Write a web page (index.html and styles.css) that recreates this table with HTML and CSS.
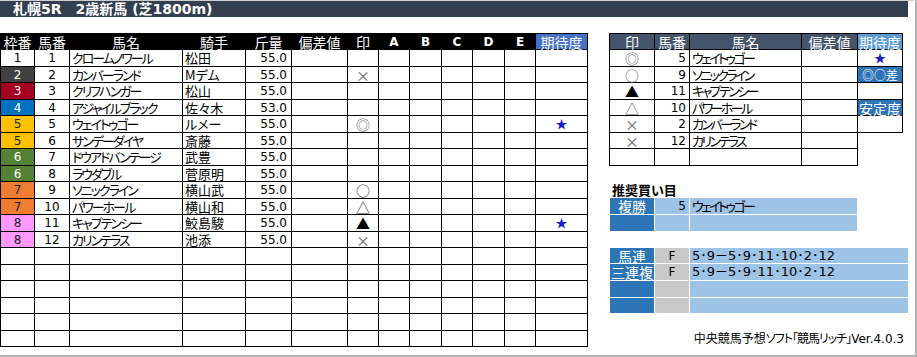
FILE: index.html
```
<!DOCTYPE html>
<html lang="ja">
<head>
<meta charset="utf-8">
<title>札幌5R 2歳新馬</title>
<link rel="stylesheet" href="styles.css">
</head>
<body>
<div class="frame">
  <div class="titlebar"><span class="title">札幌5R　2歳新馬 (芝1800m)</span></div>
  <div class="main">
    <div class="entries">
      <div class="c h">枠番</div><div class="c h">馬番</div><div class="c h">馬名</div><div class="c h">騎手</div><div class="c h">斤量</div><div class="c h">偏差値</div><div class="c h">印</div><div class="c h lat">A</div><div class="c h lat">B</div><div class="c h lat">C</div><div class="c h lat">D</div><div class="c h lat">E</div><div class="c h hx">期待度</div>

      <div class="c ctr w1">1</div><div class="c ctr">1</div><div class="c l kana">クロームノワール</div><div class="c l">松田</div><div class="c r">55.0</div><div class="c"></div><div class="c mk"></div><div class="c"></div><div class="c"></div><div class="c"></div><div class="c"></div><div class="c"></div><div class="c star"></div>

      <div class="c ctr w2">2</div><div class="c ctr">2</div><div class="c l kana">カンバーランド</div><div class="c l">Mデム</div><div class="c r">55.0</div><div class="c"></div><div class="c mk mg">×</div><div class="c"></div><div class="c"></div><div class="c"></div><div class="c"></div><div class="c"></div><div class="c star"></div>

      <div class="c ctr w3">3</div><div class="c ctr">3</div><div class="c l kana">クリフハンガー</div><div class="c l">松山</div><div class="c r">55.0</div><div class="c"></div><div class="c mk"></div><div class="c"></div><div class="c"></div><div class="c"></div><div class="c"></div><div class="c"></div><div class="c star"></div>

      <div class="c ctr w4">4</div><div class="c ctr">4</div><div class="c l kana">アジャイルブラック</div><div class="c l">佐々木</div><div class="c r">53.0</div><div class="c"></div><div class="c mk"></div><div class="c"></div><div class="c"></div><div class="c"></div><div class="c"></div><div class="c"></div><div class="c star"></div>

      <div class="c ctr w5">5</div><div class="c ctr">5</div><div class="c l kana">ウェイトゥゴー</div><div class="c l">ルメー</div><div class="c r">55.0</div><div class="c"></div><div class="c mk mg">◎</div><div class="c"></div><div class="c"></div><div class="c"></div><div class="c"></div><div class="c"></div><div class="c star">★</div>

      <div class="c ctr w5">5</div><div class="c ctr">6</div><div class="c l kana">サンデーダイヤ</div><div class="c l">斎藤</div><div class="c r">55.0</div><div class="c"></div><div class="c mk"></div><div class="c"></div><div class="c"></div><div class="c"></div><div class="c"></div><div class="c"></div><div class="c star"></div>

      <div class="c ctr w6">6</div><div class="c ctr">7</div><div class="c l kana">ドウアドバンテージ</div><div class="c l">武豊</div><div class="c r">55.0</div><div class="c"></div><div class="c mk"></div><div class="c"></div><div class="c"></div><div class="c"></div><div class="c"></div><div class="c"></div><div class="c star"></div>

      <div class="c ctr w6">6</div><div class="c ctr">8</div><div class="c l kana">ラウダブル</div><div class="c l">菅原明</div><div class="c r">55.0</div><div class="c"></div><div class="c mk"></div><div class="c"></div><div class="c"></div><div class="c"></div><div class="c"></div><div class="c"></div><div class="c star"></div>

      <div class="c ctr w7">7</div><div class="c ctr">9</div><div class="c l kana">ソニックライン</div><div class="c l">横山武</div><div class="c r">55.0</div><div class="c"></div><div class="c mk md">○</div><div class="c"></div><div class="c"></div><div class="c"></div><div class="c"></div><div class="c"></div><div class="c star"></div>

      <div class="c ctr w7">7</div><div class="c ctr">10</div><div class="c l kana">パワーホール</div><div class="c l">横山和</div><div class="c r">55.0</div><div class="c"></div><div class="c mk md">△</div><div class="c"></div><div class="c"></div><div class="c"></div><div class="c"></div><div class="c"></div><div class="c star"></div>

      <div class="c ctr w8">8</div><div class="c ctr">11</div><div class="c l kana">キャプテンシー</div><div class="c l">鮫島駿</div><div class="c r">55.0</div><div class="c"></div><div class="c mk mb">▲</div><div class="c"></div><div class="c"></div><div class="c"></div><div class="c"></div><div class="c"></div><div class="c star">★</div>

      <div class="c ctr w8">8</div><div class="c ctr">12</div><div class="c l kana">カリンテラス</div><div class="c l">池添</div><div class="c r">55.0</div><div class="c"></div><div class="c mk mg">×</div><div class="c"></div><div class="c"></div><div class="c"></div><div class="c"></div><div class="c"></div><div class="c star"></div>

      <div class="c"></div><div class="c"></div><div class="c"></div><div class="c"></div><div class="c"></div><div class="c"></div><div class="c"></div><div class="c"></div><div class="c"></div><div class="c"></div><div class="c"></div><div class="c"></div><div class="c"></div>
      <div class="c"></div><div class="c"></div><div class="c"></div><div class="c"></div><div class="c"></div><div class="c"></div><div class="c"></div><div class="c"></div><div class="c"></div><div class="c"></div><div class="c"></div><div class="c"></div><div class="c"></div>
      <div class="c"></div><div class="c"></div><div class="c"></div><div class="c"></div><div class="c"></div><div class="c"></div><div class="c"></div><div class="c"></div><div class="c"></div><div class="c"></div><div class="c"></div><div class="c"></div><div class="c"></div>
      <div class="c"></div><div class="c"></div><div class="c"></div><div class="c"></div><div class="c"></div><div class="c"></div><div class="c"></div><div class="c"></div><div class="c"></div><div class="c"></div><div class="c"></div><div class="c"></div><div class="c"></div>
      <div class="c"></div><div class="c"></div><div class="c"></div><div class="c"></div><div class="c"></div><div class="c"></div><div class="c"></div><div class="c"></div><div class="c"></div><div class="c"></div><div class="c"></div><div class="c"></div><div class="c"></div>
      <div class="c"></div><div class="c"></div><div class="c"></div><div class="c"></div><div class="c"></div><div class="c"></div><div class="c"></div><div class="c"></div><div class="c"></div><div class="c"></div><div class="c"></div><div class="c"></div><div class="c"></div>
    </div>

    <div class="side">
      <div class="picks-row">
        <div class="picks">
          <div class="c hs">印</div><div class="c hs">馬番</div><div class="c hs">馬名</div><div class="c hs">偏差値</div>
          <div class="c mk mg">◎</div><div class="c r">5</div><div class="c l kana-n">ウェイトゥゴー</div><div class="c"></div>
          <div class="c mk mg">○</div><div class="c r">9</div><div class="c l kana-n">ソニックライン</div><div class="c"></div>
          <div class="c mk mb">▲</div><div class="c r">11</div><div class="c l kana-n">キャプテンシー</div><div class="c"></div>
          <div class="c mk mg">△</div><div class="c r">10</div><div class="c l kana-n">パワーホール</div><div class="c"></div>
          <div class="c mk mg">×</div><div class="c r">2</div><div class="c l kana-n">カンバーランド</div><div class="c"></div>
          <div class="c mk mg">×</div><div class="c r">12</div><div class="c l kana-n">カリンテラス</div><div class="c"></div>
          <div class="c"></div><div class="c"></div><div class="c"></div><div class="c"></div>
        </div>
        <div class="expect">
          <div class="c ex-head">期待度</div>
          <div class="c star">★</div>
          <div class="c ex-label ex-sym">◎○差</div>
          <div class="c"></div>
          <div class="c ex-label">安定度</div>
          <div class="c"></div>
        </div>
      </div>

      <div class="bets-title">推奨買い目</div>

      <div class="bets bets-a">
        <div class="b-type">複勝</div><div class="b-num">5</div><div class="b-val kana-n">ウェイトゥゴー</div>
        <div class="b-type"></div><div class="b-num"></div><div class="b-val"></div>
      </div>

      <div class="bets bets-b">
        <div class="b-type">馬連</div><div class="b-kind">F</div><div class="b-val combo">5･9－5･9･11･10･2･12</div>
        <div class="b-type">三連複</div><div class="b-kind">F</div><div class="b-val combo">5･9－5･9･11･10･2･12</div>
        <div class="b-type"></div><div class="b-kind"></div><div class="b-val"></div>
        <div class="b-type"></div><div class="b-kind"></div><div class="b-val"></div>
      </div>

      <div class="footer">中央競馬予想<span class="kana-f">ソフト「競馬リッチ」</span><span class="ver">Ver.4.0.3</span></div>
    </div>
  </div>
</div>
</body>
</html>
```

FILE: styles.css
```
* { box-sizing: border-box; }

html, body {
  margin: 0;
  padding: 0;
  background: #ffffff;
}

body {
  font-family: "DejaVu Sans", "Noto Sans CJK JP", sans-serif;
  font-size: 12px;
  color: #000;
  font-feature-settings: "palt";
}

.frame {
  width: 917px;
  height: 357px;
  border-top: 1px solid #cfcfcf;
  border-right: 2px solid #b4b4b4;
  border-bottom: 2px solid #b4b4b4;
  overflow: hidden;
}

.titlebar {
  width: 908px;
  height: 16px;
  background: #333f50;
  display: flex;
  align-items: center;
  padding-left: 13px;
}

.title {
  color: #fff;
  font-weight: bold;
  font-size: 14px;
  line-height: 15px;
}

.main {
  display: flex;
  margin-top: 16px;
  gap: 21px;
  align-items: flex-start;
}

/* generic grid cell */
.c {
  border-right: 1px solid #000;
  border-bottom: 1px solid #000;
  display: flex;
  align-items: center;
  white-space: nowrap;
  line-height: 14px;
  font-size: 12px;
  min-width: 0;
}

.ctr { justify-content: center; }
.r { justify-content: flex-end; padding-right: 4px; }
.l {
  justify-content: flex-start;
  padding-left: 2px;
  font-size: 13px;
  font-family: "Noto Sans CJK JP", sans-serif;
}

.kana { letter-spacing: -2px; }
.kana-n { letter-spacing: -2.6px; }

/* entries table */
.entries {
  display: grid;
  grid-template-columns: 34px 35px 113px 63px 46px 56px 31px 31px 32px 31px 32px 31px 52px;
  grid-template-rows: 16px repeat(9, 17px 16px);
  border-left: 1px solid #000;
  border-top: 1px solid #000;
  width: 588px;
}

.h {
  background: #000;
  color: #fff;
  justify-content: center;
  font-family: "Noto Sans CJK JP", sans-serif;
  font-size: 14px;
}

.lat {
  font-family: "DejaVu Sans", sans-serif;
  font-weight: bold;
  font-size: 12px;
}

.hx { background: #4472c4; }

.w1 { background: #ffffff; color: #000; }
.w2 { background: #404040; color: #fff; }
.w3 { background: #a50021; color: #fff; }
.w4 { background: #0070c0; color: #fff; }
.w5 { background: #ffc000; color: #222; }
.w6 { background: #548235; color: #fff; }
.w7 { background: #ed7d31; color: #222; }
.w8 { background: #ff99ff; color: #222; }

.mk {
  justify-content: center;
  font-family: "Noto Sans CJK JP", sans-serif;
  font-size: 14px;
}
.mg { color: #6a6a6a; }
.md { color: #333; }
.mb { color: #000; }

.star {
  justify-content: center;
  color: #1a1ac8;
  font-family: "Noto Sans CJK JP", sans-serif;
  font-size: 12px;
}

/* side */
.side {
  width: 299px;
  display: flex;
  flex-direction: column;
}

.picks-row {
  display: flex;
  align-items: flex-start;
}

.picks {
  display: grid;
  grid-template-columns: 45px 35px 112px 56px;
  grid-template-rows: 16px 17px 16px 17px 16px 17px 16px 17px;
  border-left: 1px solid #000;
  border-top: 1px solid #000;
  width: 249px;
}

.picks .r { padding-right: 3px; }

.hs {
  background: #44546a;
  color: #fff;
  justify-content: center;
  font-family: "Noto Sans CJK JP", sans-serif;
  font-size: 14px;
}

.expect {
  display: grid;
  grid-template-columns: 45px;
  grid-template-rows: 16px 17px 16px 17px 16px 17px;
  border-top: 1px solid #000;
  width: 45px;
}

.ex-head {
  background: #5b9bd5;
  color: #fff;
  justify-content: center;
  font-family: "Noto Sans CJK JP", sans-serif;
  font-size: 14px;
}

.ex-label {
  background: #2e75b6;
  color: #fff;
  justify-content: center;
  font-family: "Noto Sans CJK JP", sans-serif;
  font-size: 14px;
}

.ex-sym {
  font-size: 12px;
}

.bets-title {
  margin-top: 16px;
  height: 16px;
  padding-left: 3px;
  font-family: "Noto Sans CJK JP", sans-serif;
  font-weight: bold;
  font-size: 13px;
  line-height: 16px;
}

.bets {
  display: grid;
  gap: 1px;
  margin-left: 1px;
}

.bets-a {
  grid-template-columns: 44px 34px 167px;
  grid-template-rows: 16px 16px;
}

.bets-b {
  margin-top: 17px;
  grid-template-columns: 44px 34px 218px;
  grid-template-rows: 15px 16px 16px 15px;
}

.b-type, .b-num, .b-val, .b-kind {
  display: flex;
  align-items: center;
  white-space: nowrap;
  line-height: 14px;
  min-width: 0;
}

.b-type {
  background: #2e75b6;
  color: #fff;
  justify-content: center;
  font-family: "Noto Sans CJK JP", sans-serif;
  font-size: 14px;
}

.b-num {
  background: #9dc3e6;
  justify-content: flex-end;
  padding-right: 3px;
  font-size: 12px;
}

.b-kind {
  background: #c9c9c9;
  justify-content: center;
  font-size: 12px;
}

.b-val {
  background: #9dc3e6;
  padding-left: 2px;
  font-family: "Noto Sans CJK JP", sans-serif;
  font-size: 13px;
}

.combo {
  font-family: "DejaVu Sans", "Noto Sans CJK JP", sans-serif;
  font-size: 13px;
}

.footer {
  margin-top: 17px;
  height: 16px;
  line-height: 16px;
  text-align: right;
  padding-right: 4px;
  font-family: "Noto Sans CJK JP", sans-serif;
  font-size: 12px;
}

.kana-f { letter-spacing: -1px; }

.ver {
  font-family: "DejaVu Sans", sans-serif;
  font-size: 12px;
  letter-spacing: 0;
}
```
